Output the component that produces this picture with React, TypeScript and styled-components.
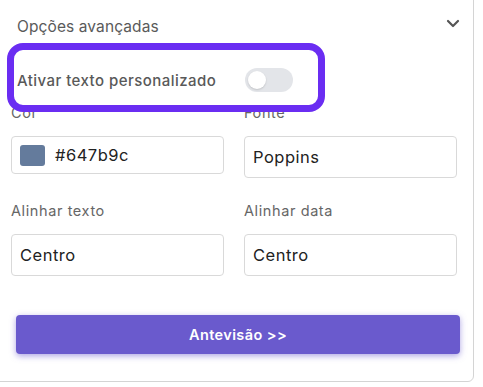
import React from 'react'
import styled, { createGlobalStyle } from 'styled-components'

const Global = createGlobalStyle`
  html, body {
    margin: 0;
    padding: 0;
    background: #ffffff;
    overflow: hidden;
  }
  body {
    font-family: Inter, 'Noto Sans', sans-serif;
  }
`

const Card = styled.section`
  position: relative;
  box-sizing: border-box;
  width: 484px;
  margin: -10px 0 0 -10px;
  padding: 17px 16px 27px 20px;
  border: 1px solid #d4d4d4;
  border-radius: 6px;
  background: #fff;
`

const Header = styled.header`
  display: flex;
  height: 36px;
  padding-left: 6px;
  align-items: center;
  justify-content: space-between;
  font-size: 15.5px;
  letter-spacing: 0.1px;
  color: #5a5a5a;
`

const Chevron = styled.svg`
  width: 16px;
  height: 16px;
  margin-right: -4px;
  margin-top: -7px;
`

const ToggleRow = styled.div`
  display: flex;
  height: 24px;
  margin-top: 24px;
  padding-left: 6px;
  align-items: center;
  gap: 29px;
  font-size: 15px;
  font-weight: 500;
  letter-spacing: 0.45px;
  color: #595959;
`

const Switch = styled.span`
  position: relative;
  flex: 0 0 48px;
  height: 24px;
  border-radius: 12px;
  background: #e3e5e9;
  &::after {
    content: '';
    position: absolute;
    top: 3px;
    left: 3px;
    width: 18px;
    height: 18px;
    border-radius: 50%;
    background: #fff;
    box-shadow: 0 1px 2px rgba(0, 0, 0, 0.15);
  }
`

const Grid = styled.div`
  display: grid;
  grid-template-columns: 213px 213px;
  column-gap: 20px;
  row-gap: 23px;
  margin-top: 11px;
  align-items: start;
`

const Field = styled.div`
  display: flex;
  flex-direction: column;
`

const Label = styled.label`
  height: 20px;
  line-height: 20px;
  margin-bottom: 13px;
  font-size: 14.5px;
  letter-spacing: 0.6px;
  color: #666;
`

const Input = styled.div<{ $h: number }>`
  box-sizing: border-box;
  display: flex;
  height: ${p => p.$h}px;
  padding: 0 8px;
  align-items: center;
  gap: 10px;
  border: 1px solid #d9d9d9;
  border-radius: 4px;
  font-size: 16.5px;
  letter-spacing: 0.5px;
  color: #222;
`

const Swatch = styled.span<{ $color: string }>`
  flex: 0 0 25px;
  height: 21px;
  border-radius: 3px;
  background: ${p => p.$color};
`

const Button = styled.button`
  display: block;
  width: 444px;
  height: 39px;
  margin: 39px 0 0 5px;
  border: none;
  border-radius: 4px;
  background: #6a5acd;
  box-shadow: 0 2px 6px rgba(106, 90, 205, 0.55);
  font-family: inherit;
  font-size: 14.5px;
  font-weight: 600;
  letter-spacing: 0.4px;
  color: #fff;
`

const Highlight = styled.div`
  position: absolute;
  left: 16px;
  top: 52px;
  box-sizing: border-box;
  width: 318px;
  height: 69px;
  border: 7px solid #6a2df2;
  border-radius: 16px;
  pointer-events: none;
`

export default function App() {
  return (
    <>
      <Global />
      <Card>
        <Header>
          <span>Opções avançadas</span>
          <Chevron viewBox="0 0 16 16" fill="none" stroke="#555" strokeWidth="2.2" strokeLinecap="round" strokeLinejoin="round">
            <path d="M3 6l5 5 5-5" />
          </Chevron>
        </Header>
        <ToggleRow>
          <span>Ativar texto personalizado</span>
          <Switch />
        </ToggleRow>
        <Grid>
          <Field>
            <Label>Cor</Label>
            <Input $h={38}>
              <Swatch $color="#647b9c" />
              #647b9c
            </Input>
          </Field>
          <Field>
            <Label>Fonte</Label>
            <Input $h={42}>Poppins</Input>
          </Field>
          <Field>
            <Label>Alinhar texto</Label>
            <Input $h={42}>Centro</Input>
          </Field>
          <Field>
            <Label>Alinhar data</Label>
            <Input $h={42}>Centro</Input>
          </Field>
        </Grid>
        <Button>Antevisão &gt;&gt;</Button>
        <Highlight />
      </Card>
    </>
  )
}
